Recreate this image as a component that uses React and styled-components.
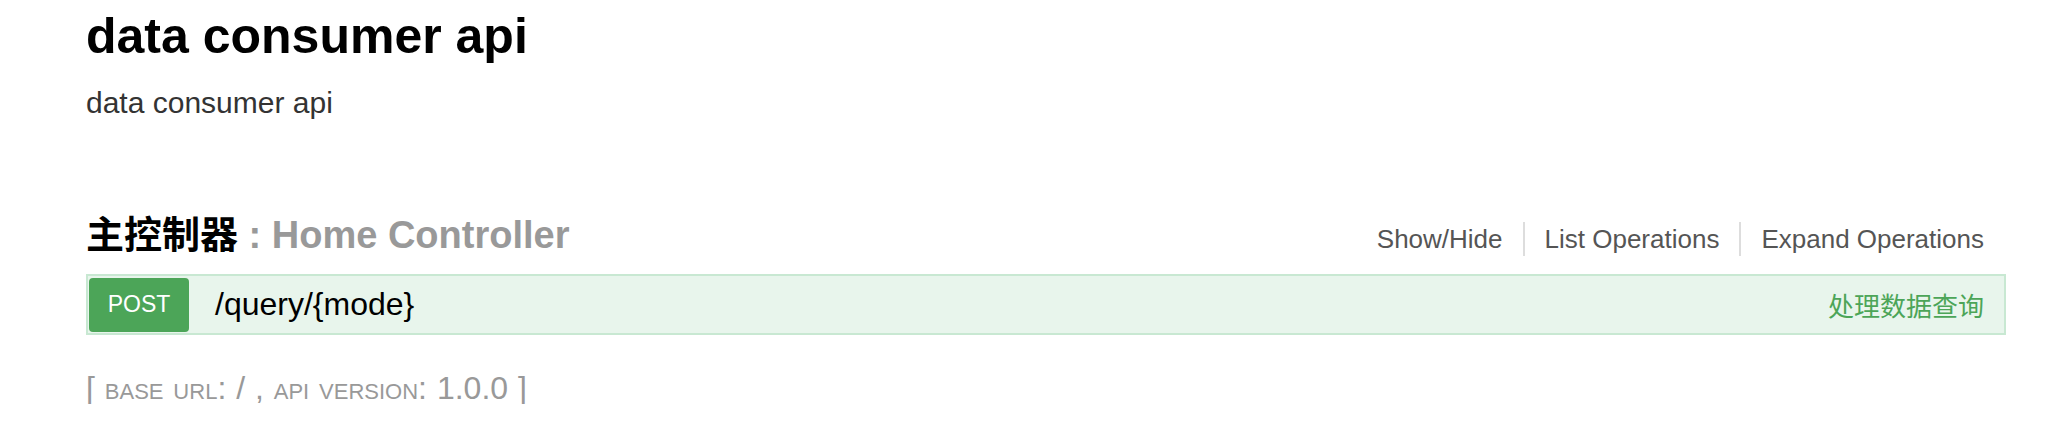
import React from "react";
import styled, { createGlobalStyle } from "styled-components";

const Global = createGlobalStyle`
  html, body { margin: 0; padding: 0; background: #fff; }
  body { font-family: "Liberation Sans", "Noto Sans CJK SC", Arial, sans-serif; }
`;

const Wrap = styled.div`
  width: 1920px;
  margin-left: 86px;
  display: flex;
  flex-direction: column;
`;

const Info = styled.div`
  display: flex;
  flex-direction: column;
  padding-top: 11px;
`;

const Title = styled.div`
  font-size: 50px;
  line-height: 50px;
  font-weight: bold;
  color: #000;
`;

const Description = styled.p`
  margin: 27px 0 0;
  font-size: 30px;
  line-height: 30px;
  color: #333;
`;

const ResourceHeading = styled.div`
  display: flex;
  align-items: baseline;
  justify-content: space-between;
  margin-top: 98px;
  height: 42px;
`;

const ResourceTitle = styled.h2`
  margin: 0;
  font-size: 38px;
  line-height: 38px;
  font-weight: bold;
  color: #999;
`;

const ResourceName = styled.span`
  color: #000;
`;

const Options = styled.ul`
  list-style: none;
  margin: 0;
  padding: 0 22px 0 0;
  display: flex;
  align-items: center;
`;

const OptionItem = styled.li`
  font-size: 26px;
  line-height: 34px;
  color: #555;
  padding: 0 ${(p) => (p.$last ? "0" : "20px")} 0 ${(p) => (p.$first ? "0" : "20px")};
  border-left: ${(p) => (p.$first ? "none" : "2px solid #ddd")};
`;

const OperationBar = styled.div`
  margin-top: 16px;
  display: flex;
  align-items: center;
  background: #e8f5ec;
  border: 2px solid #c8e8d2;
  padding: 1px 20px 1px 1px;
  height: 55px;
  box-sizing: content-box;
`;

const MethodBadge = styled.span`
  width: 100px;
  height: 54px;
  display: flex;
  align-items: center;
  justify-content: center;
  background: #4ca558;
  color: #fff;
  font-size: 23px;
  border-radius: 4px;
  text-transform: uppercase;
`;

const PathText = styled.span`
  margin-left: 26px;
  font-size: 32px;
  color: #000;
  flex: 1;
`;

const Summary = styled.span`
  font-size: 26px;
  color: #4ca558;
`;

const Footer = styled.div`
  margin-top: 37px;
  font-size: 32px;
  line-height: 32px;
  word-spacing: 1px;
  color: #999;
`;

const SmallCaps = styled.span`
  font-variant: small-caps;
`;

export default function App() {
  return (
    <>
      <Global />
      <Wrap>
        <Info>
          <Title>data consumer api</Title>
          <Description>data consumer api</Description>
        </Info>
        <ResourceHeading>
          <ResourceTitle>
            <ResourceName>主控制器</ResourceName> : Home Controller
          </ResourceTitle>
          <Options>
            <OptionItem $first>Show/Hide</OptionItem>
            <OptionItem>List Operations</OptionItem>
            <OptionItem $last>Expand Operations</OptionItem>
          </Options>
        </ResourceHeading>
        <OperationBar>
          <MethodBadge>post</MethodBadge>
          <PathText>/query/{"{mode}"}</PathText>
          <Summary>处理数据查询</Summary>
        </OperationBar>
        <Footer>
          [ <SmallCaps>base url</SmallCaps>: / , <SmallCaps>api version</SmallCaps>: 1.0.0 ]
        </Footer>
      </Wrap>
    </>
  );
}
